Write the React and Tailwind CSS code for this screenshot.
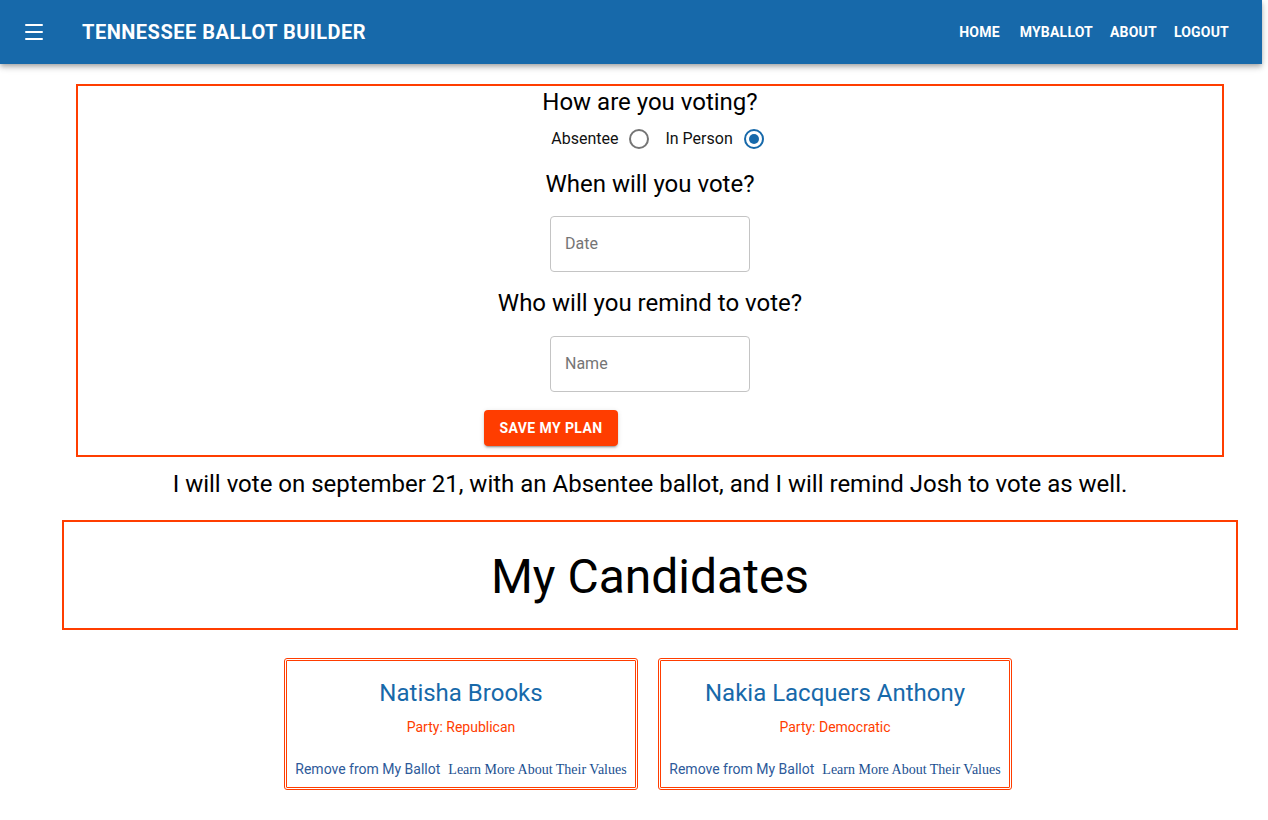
import { Menu } from 'lucide-react';

const candidates = [
  { name: 'Natisha Brooks', party: 'Republican' },
  { name: 'Nakia Lacquers Anthony', party: 'Democratic' },
];

function Radio({ label, checked }) {
  return (
    <label className="flex items-center gap-[11px]">
      <span>{label}</span>
      <span
        className={
          'flex h-[20px] w-[20px] items-center justify-center rounded-full border-2 ' +
          (checked ? 'border-[#1769aa]' : 'border-[#757575]')
        }
      >
        {checked && <span className="h-[10px] w-[10px] rounded-full bg-[#1769aa]" />}
      </span>
    </label>
  );
}

function Field({ placeholder }) {
  return (
    <div className="flex h-[56px] w-[200px] items-center rounded border border-[#c4c4c4] px-[14px] text-[16px] text-[#757575]">
      {placeholder}
    </div>
  );
}

export default function App() {
  return (
    <div className="min-h-[820px] bg-white font-['Roboto',sans-serif] text-black">
      {/* App bar */}
      <header className="flex h-[64px] w-[1262px] items-center bg-[#1769aa] pl-[22px] pr-[33px] text-white shadow-[0_2px_4px_-1px_rgba(0,0,0,0.2),0_4px_5px_0_rgba(0,0,0,0.14),0_1px_10px_0_rgba(0,0,0,0.12)]">
        <Menu size={24} strokeWidth={2} />
        <h1 className="ml-[36px] text-[20px] font-bold tracking-[0.5px]">TENNESSEE BALLOT BUILDER</h1>
        <nav className="ml-auto flex items-center gap-[17px] text-[14px] font-bold tracking-[0.2px]">
          <a className="mr-[3px]">HOME</a>
          <a>MYBALLOT</a>
          <a>ABOUT</a>
          <a>LOGOUT</a>
        </nav>
      </header>

      {/* Voting plan */}
      <section className="mx-[76px] mt-[20px] flex w-[1148px] flex-col items-center border-2 border-[#ff3d00] pb-[9px]">
        <h2 className="text-[24px] leading-[32px]">How are you voting?</h2>
        <div className="mt-[9px] flex items-center gap-[16px] pl-[15px] text-[16px] leading-[24px] text-[#111]">
          <Radio label="Absentee" />
          <Radio label="In Person" checked />
        </div>
        <h2 className="mt-[17px] text-[24px] leading-[32px]">When will you vote?</h2>
        <div className="mt-[16px]">
          <Field placeholder="Date" />
        </div>
        <h2 className="mt-[15px] text-[24px] leading-[32px]">Who will you remind to vote?</h2>
        <div className="mt-[17px]">
          <Field placeholder="Name" />
        </div>
        <div className="mt-[18px] w-[332px]">
          <button className="h-[36px] w-[134px] rounded bg-[#ff3d00] text-[14px] font-bold tracking-[0.4px] text-white shadow-[0_3px_1px_-2px_rgba(0,0,0,0.2),0_2px_2px_0_rgba(0,0,0,0.14),0_1px_5px_0_rgba(0,0,0,0.12)]">
            SAVE MY PLAN
          </button>
        </div>
      </section>

      <p className="mt-[11px] w-[1300px] text-center text-[24px] leading-[32px]">
        I will vote on september 21, with an Absentee ballot, and I will remind Josh to vote as well.
      </p>

      {/* Candidates */}
      <section className="mx-[62px] mt-[20px] flex h-[110px] w-[1176px] items-center justify-center border-2 border-[#ff3d00] pt-[4px]">
        <h2 className="text-[48px] leading-none">My Candidates</h2>
      </section>

      <div className="mt-[28px] flex w-[1296px] justify-center gap-[20px]">
        {candidates.map((c) => (
          <div
            key={c.name}
            className="flex h-[132px] w-[354px] flex-col items-center rounded-[3px] border-[3px] border-double border-[#ff3d00] pt-[16px]"
          >
            <h3 className="text-[24px] leading-[32px] text-[#1769aa]">{c.name}</h3>
            <p className="mt-[8px] text-[14px] leading-[20px] text-[#ff3d00]">Party: {c.party}</p>
            <div className="mt-auto mb-[7px] flex items-baseline gap-[8px] leading-[20px]">
              <a className="text-[14px] text-[#2e5a9a]">Remove from My Ballot</a>
              <a className="font-['Liberation_Serif',serif] text-[14px] text-[#1a4f8f]">
                Learn More About Their Values
              </a>
            </div>
          </div>
        ))}
      </div>
    </div>
  );
}
